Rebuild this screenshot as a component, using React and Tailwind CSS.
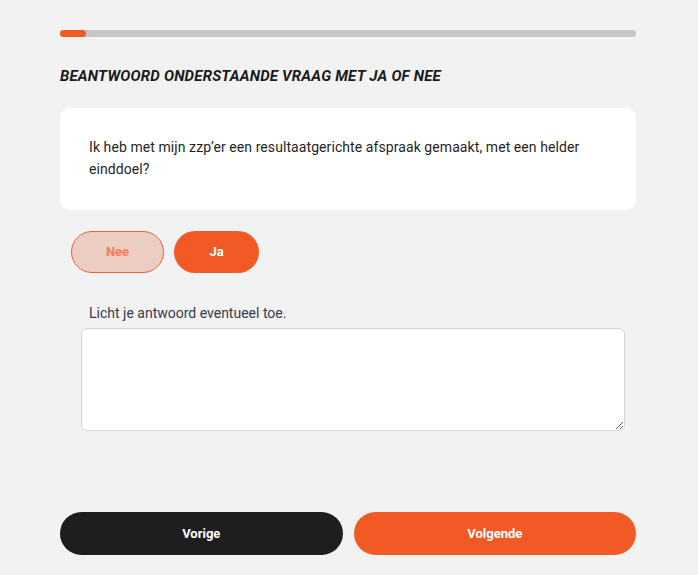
import React, { useState } from "react";

export default function App() {
  const [answer, setAnswer] = useState("ja");
  const [note, setNote] = useState("");

  return (
    <div className="min-h-screen bg-[#f2f2f2] font-['Roboto',sans-serif]">
      <div className="pl-[60px] pr-[62px] pt-[30px]">
        {/* Progress */}
        <div className="h-[7px] w-full rounded-full bg-[#c6c6c6]">
          <div className="h-[7px] w-[26px] rounded-full bg-[#f15a24]" />
        </div>

        {/* Title */}
        <h1 className="mt-[29px] text-[15px] leading-[20px] font-bold italic uppercase tracking-[0.2px] text-[#1a1a1a]">
          Beantwoord onderstaande vraag met ja of nee
        </h1>

        {/* Question card */}
        <div className="mt-[22px] rounded-[10px] bg-white px-[29px] pt-[28px] pb-[30px]">
          <p className="text-[14px] leading-[22px] tracking-[0.08px] text-[#1f1f1f]">
            Ik heb met mijn zzp’er een resultaatgerichte afspraak gemaakt, met een helder einddoel?
          </p>
        </div>

        {/* Answer buttons */}
        <div className="mt-[21px] flex gap-[10px] pl-[11px]">
          <button
            onClick={() => setAnswer("nee")}
            className="h-[42px] w-[93px] rounded-full border border-[#e9643d] bg-[#ebcdc2] text-[13px] font-bold text-[#f47c57]"
          >
            Nee
          </button>
          <button
            onClick={() => setAnswer("ja")}
            className="h-[42px] w-[85px] rounded-full bg-[#f15a24] text-[13px] font-bold text-white"
          >
            Ja
          </button>
        </div>

        {/* Explanation */}
        <div className="mt-[31px] pl-[21px] pr-[11px]">
          <label className="block pl-[8px] text-[14px] leading-[18px] text-[#3a3a4c]">
            Licht je antwoord eventueel toe.
          </label>
          <textarea
            value={note}
            onChange={(e) => setNote(e.target.value)}
            className="mt-[6px] block h-[103px] w-full rounded-[6px] border border-[#d3d3d8] bg-white p-2 text-[14px] outline-none"
          />
        </div>

        {/* Navigation */}
        <div className="mt-[81px] flex gap-[11px]">
          <button className="h-[43px] flex-1 rounded-full bg-[#1e1e1e] text-[13px] font-bold text-white">
            Vorige
          </button>
          <button className="h-[43px] flex-1 rounded-full bg-[#f15a24] text-[13px] font-bold text-white">
            Volgende
          </button>
        </div>
      </div>
    </div>
  );
}
